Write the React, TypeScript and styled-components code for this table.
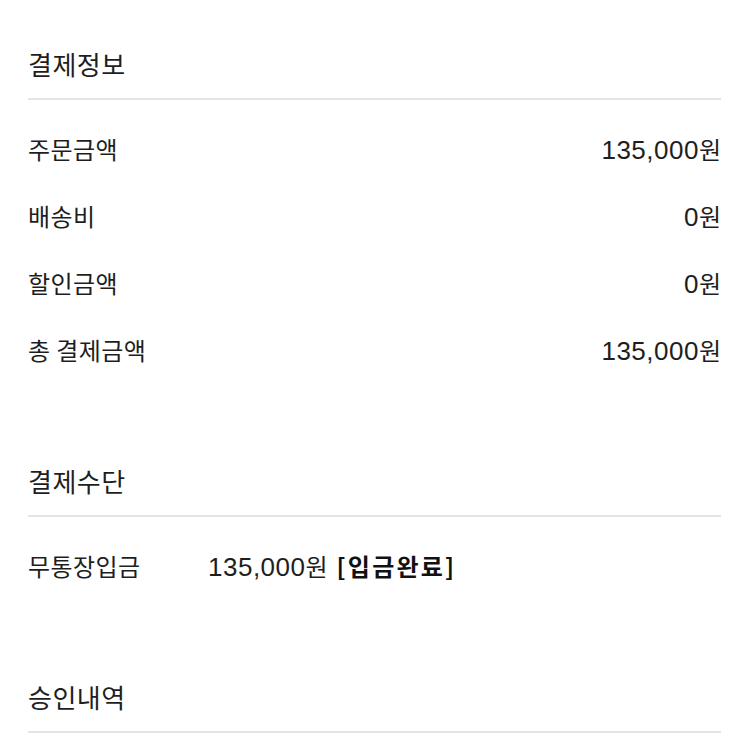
import React from "react";
import styled, { createGlobalStyle } from "styled-components";

const GlobalStyle = createGlobalStyle`
  body {
    margin: 0;
    background: #ffffff;
    font-family: "Noto Sans CJK KR", "Noto Sans", sans-serif;
    color: #1e1e1e;
  }
`;

const Page = styled.div`
  padding: 0 29px 0 28px;
`;

const Section = styled.section`
  margin-bottom: 21px;
`;

const Title = styled.h2`
  margin: 0;
  padding: 46px 0 16px;
  font-size: 26px;
  line-height: 36px;
  font-weight: 400;
  letter-spacing: 0.5px;
  border-bottom: 2px solid #e4e4e4;
`;

const List = styled.div`
  padding: 15px 0 13px;
`;

const Row = styled.div<{ $spread?: boolean }>`
  display: flex;
  align-items: center;
  justify-content: ${({ $spread }) => ($spread ? "space-between" : "flex-start")};
  height: 67px;
  font-size: 24px;
  letter-spacing: 0.4px;
`;

const Label = styled.span<{ $width?: number }>`
  ${({ $width }) => ($width ? `width: ${$width}px;` : "")}
`;

const Amount = styled.span`
  font-family: "Liberation Sans", "Noto Sans CJK KR", sans-serif;
  font-size: 26px;
  letter-spacing: 0.5px;
`;

const Won = styled.span`
  font-family: "Noto Sans CJK KR", sans-serif;
  font-size: 24px;
  letter-spacing: 0;
`;

const Status = styled.strong`
  margin-left: 9px;
  font-weight: 700;
  letter-spacing: 2.2px;
  color: #111;
`;

const Price: React.FC<{ value: string }> = ({ value }) => (
  <Amount>
    {value}
    <Won>원</Won>
  </Amount>
);

const summary = [
  { label: "주문금액", value: "135,000" },
  { label: "배송비", value: "0" },
  { label: "할인금액", value: "0" },
  { label: "총 결제금액", value: "135,000" },
];

export default function App() {
  return (
    <Page>
      <GlobalStyle />
      <Section>
        <Title>결제정보</Title>
        <List>
          {summary.map((item) => (
            <Row $spread key={item.label}>
              <Label>{item.label}</Label>
              <Price value={item.value} />
            </Row>
          ))}
        </List>
      </Section>
      <Section>
        <Title>결제수단</Title>
        <List>
          <Row>
            <Label $width={180}>무통장입금</Label>
            <Price value="135,000" />
            <Status>[입금완료]</Status>
          </Row>
        </List>
      </Section>
      <Section>
        <Title>승인내역</Title>
      </Section>
    </Page>
  );
}
